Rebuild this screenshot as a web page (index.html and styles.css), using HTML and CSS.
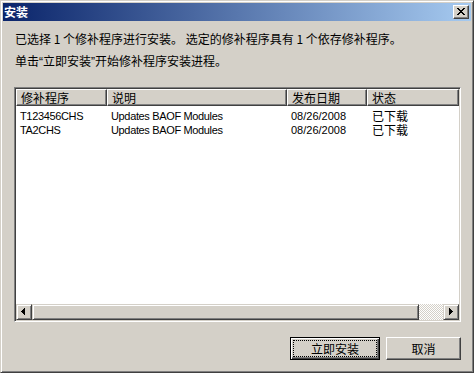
FILE: index.html
```html
<!DOCTYPE html>
<html lang="zh-CN">
<head>
<meta charset="utf-8">
<title>安装</title>
<link rel="stylesheet" href="styles.css">
</head>
<body>
<div class="window">
  <div class="titlebar">
    <span class="title">安装</span>
    <div class="close">
      <svg width="8" height="7" viewBox="0 0 8 7" shape-rendering="crispEdges"><path fill="#000" d="M0 0h2v1H0zM6 0h2v1H6zM1 1h2v1H1zM5 1h2v1H5zM2 2h4v1H2zM3 3h2v1H3zM2 4h4v1H2zM1 5h2v1H1zM5 5h2v1H5zM0 6h2v1H0zM6 6h2v1H6z"/></svg>
    </div>
  </div>
  <div class="content">
    <div class="intro">
      <p class="line">已选择 1 个修补程序进行安装。 选定的修补程序具有 1 个依存修补程序。</p>
      <p class="line">单击<span class="q">“</span>立即安装<span class="q">”</span>开始修补程序安装进程。</p>
    </div>
    <div class="listbox">
      <div class="header">
        <div class="hcell">修补程序</div>
        <div class="hcell">说明</div>
        <div class="hcell">发布日期</div>
        <div class="hcell">状态</div>
      </div>
      <div class="rows">
        <div class="row">
          <div class="cell t">T123456CHS</div>
          <div class="cell t">Updates BAOF Modules</div>
          <div class="cell">08/26/2008</div>
          <div class="cell c4">已下载</div>
        </div>
        <div class="row">
          <div class="cell t">TA2CHS</div>
          <div class="cell t">Updates BAOF Modules</div>
          <div class="cell">08/26/2008</div>
          <div class="cell c4">已下载</div>
        </div>
      </div>
      <div class="hscroll">
        <div class="sbtn left">
          <svg width="4" height="7" viewBox="0 0 4 7" shape-rendering="crispEdges"><path fill="#000" d="M0 3h1v1H0zM1 2h1v3H1zM2 1h1v5H2zM3 0h1v7H3z"/></svg>
        </div>
        <div class="thumb"></div>
        <div class="track"></div>
        <div class="sbtn right">
          <svg width="4" height="7" viewBox="0 0 4 7" shape-rendering="crispEdges"><path fill="#000" d="M0 0h1v7H0zM1 1h1v5H1zM2 2h1v3H2zM3 3h1v1H3z"/></svg>
        </div>
      </div>
    </div>
    <div class="buttons">
      <div class="btn default"><span class="focus">立即安装</span></div>
      <div class="btn">取消</div>
    </div>
  </div>
</div>
</body>
</html>
```

FILE: styles.css
```css
* {
  box-sizing: border-box;
  margin: 0;
  padding: 0;
}

html, body {
  margin: 0;
  background: #d4d0c8;
}

body {
  font-family: "Noto Sans CJK SC", sans-serif;
  font-size: 12px;
  color: #000;
}

.window {
  width: 474px;
  height: 373px;
  border: 1px solid;
  border-color: #d4d0c8 #404040 #404040 #d4d0c8;
  box-shadow: inset 1px 1px #fff, inset -1px -1px #808080;
  padding: 2px;
  display: flex;
  flex-direction: column;
  background: #d4d0c8;
}

.titlebar {
  height: 18px;
  flex: none;
  background: linear-gradient(to right, #0a246a, #a6caf0);
  display: flex;
  align-items: center;
  justify-content: space-between;
  padding: 0 2px 0 1px;
}

.title {
  color: #fff;
  font-weight: bold;
  font-size: 12px;
  line-height: 18px;
  white-space: nowrap;
}

.close {
  width: 16px;
  height: 14px;
  background: #d4d0c8;
  border: 1px solid;
  border-color: #fff #404040 #404040 #fff;
  box-shadow: inset -1px -1px #808080;
  padding: 2px 0 0 3px;
}

.close svg,
.sbtn svg {
  display: block;
}

.content {
  flex: 1;
  padding: 0 10px 0 11px;
  display: flex;
  flex-direction: column;
}

.intro {
  padding: 7px 0 0 1px;
  line-height: 22px;
}

.line {
  white-space: nowrap;
}

.q {
  font-family: "Liberation Sans", sans-serif;
}

.listbox {
  margin-top: 14px;
  height: 235px;
  flex: none;
  border: 1px solid;
  border-color: #808080 #fff #fff #808080;
  box-shadow: inset 1px 1px #404040, inset -1px -1px #d4d0c8;
  padding: 1px;
  background: #fff;
  display: flex;
  flex-direction: column;
}

.header {
  display: grid;
  grid-template-columns: 91px 180px 80px 92px;
  height: 17px;
  flex: none;
  background: #d4d0c8;
}

.hcell {
  border: 1px solid;
  border-color: #fff #404040 #404040 #fff;
  box-shadow: inset -1px -1px #808080;
  padding-left: 4px;
  line-height: 15px;
  white-space: nowrap;
  overflow: hidden;
}

.rows {
  flex: 1;
  padding-top: 3px;
  background: #fff;
}

.row {
  display: grid;
  grid-template-columns: 91px 180px 80px 92px;
  height: 14px;
  line-height: 14px;
  font-family: "Liberation Sans", sans-serif;
  font-size: 11px;
}

.cell {
  padding-left: 4px;
  white-space: nowrap;
}

.cell.t {
  letter-spacing: -0.35px;
}

.cell.c4 {
  padding-left: 5px;
  font-family: "Noto Sans CJK SC", sans-serif;
  font-size: 12px;
  line-height: 13px;
}

.hscroll {
  height: 16px;
  flex: none;
  display: flex;
  background: #d4d0c8;
}

.sbtn,
.thumb {
  background: #d4d0c8;
  border: 1px solid;
  border-color: #d4d0c8 #404040 #404040 #d4d0c8;
  box-shadow: inset 1px 1px #fff, inset -1px -1px #808080;
}

.sbtn {
  width: 16px;
  flex: none;
  padding-top: 3px;
}

.sbtn.left {
  padding-left: 4px;
}

.sbtn.right {
  padding-left: 5px;
}

.thumb {
  width: 387px;
  flex: none;
}

.track {
  flex: 1;
  background: repeating-conic-gradient(#d4d0c8 0% 25%, #fff 0% 50%) 0 0 / 2px 2px;
}

.buttons {
  margin-top: 15px;
  display: flex;
  justify-content: flex-end;
  gap: 6px;
}

.btn {
  height: 23px;
  width: 75px;
  flex: none;
  background: #d4d0c8;
  border: 1px solid;
  border-color: #fff #404040 #404040 #fff;
  box-shadow: inset -1px -1px #808080;
  display: flex;
  align-items: center;
  justify-content: center;
  line-height: 15px;
  white-space: nowrap;
}

.btn.default {
  width: 90px;
  border-color: #000;
  box-shadow: inset 1px 1px #fff, inset -1px -1px #404040, inset -2px -2px #808080;
  padding: 2px;
  align-items: stretch;
}

.focus {
  flex: 1;
  border: 1px dotted #000;
  display: flex;
  align-items: center;
  justify-content: center;
}
```
